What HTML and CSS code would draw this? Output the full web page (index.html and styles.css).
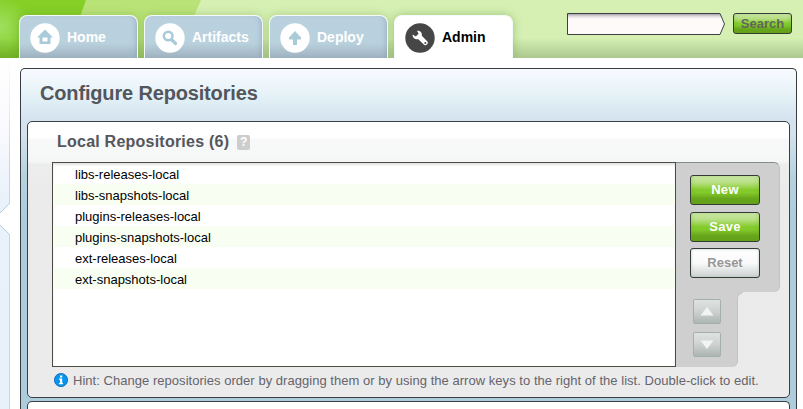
FILE: index.html
```html
<!DOCTYPE html>
<html lang="en">
<head>
<meta charset="utf-8">
<title>Configure Repositories</title>
<link rel="stylesheet" href="styles.css">
</head>
<body>
<header class="header">
  <svg class="header-art" width="803" height="58" aria-hidden="true">
    <defs>
      <radialGradient id="glow" gradientUnits="userSpaceOnUse" cx="0" cy="27" r="30"><stop stop-color="#a0df60"/><stop offset="1" stop-color="#85cf27"/></radialGradient>
      <linearGradient id="shade" x2="0" y2="1"><stop offset="0" stop-color="#406030" stop-opacity="0"/><stop offset="1" stop-color="#406030" stop-opacity=".28"/></linearGradient>
    </defs>
    <path fill="#d5f0b2" d="M0 0h803v58H0z"/>
    <path fill="#b9e377" d="M0 0h201l-26 58H0z"/>
    <path fill="url(#glow)" d="M0 0h86L65 58H0z"/>
    <path fill="url(#shade)" d="M0 38h803v20H0z"/>
  </svg>
  <nav class="tabs">
    <a class="tab"><svg class="tab-icon" viewBox="0 0 30 30"><circle cx="15" cy="15" r="14.7" fill="#fff"/><path fill="#a9cbd9" fill-rule="evenodd" d="M15 6.500 23 14.500H20.500v6.500h-11v-6.500H7zM12.500 14.500v4h5v-4z"/></svg><span>Home</span></a>
    <a class="tab"><svg class="tab-icon" viewBox="0 0 30 30"><circle cx="15" cy="15" r="14.700" fill="#fff"/><g fill="none" stroke="#a9cbd9"><circle cx="13.200" cy="13" r="4.300" stroke-width="2.500"/><path stroke-width="3.200" stroke-linecap="round" d="m17 17 3.500 3.500"/></g></svg><span>Artifacts</span></a>
    <a class="tab"><svg class="tab-icon" viewBox="0 0 30 30"><circle cx="15" cy="15" r="14.700" fill="#fff"/><path fill="#a9cbd9" d="m15 8 6 6.500v2h-4V22h-4v-5.500H9v-2z"/></svg><span>Deploy</span></a>
    <a class="tab active"><svg class="tab-icon" viewBox="0 0 30 30"><circle cx="15" cy="15" r="14.700" fill="#464646"/><path fill="#fff" d="M12 7.800c3-.5 5.500 1.800 4.800 5l5.400 5.400c2 2-1.400 5.400-3.400 3.400l-5.500-5.400c-3 .8-6-1.600-5.700-4.700l3.200 2 2.800-2.700z"/><circle cx="20.300" cy="20" r="1" fill="#464646"/></svg><span>Admin</span></a>
  </nav>
  <form class="search">
    <svg width="160" height="22" viewBox="0 0 160 22" aria-hidden="true"><defs><linearGradient id="field" x2="0" y2="1"><stop stop-color="#9999a0"/><stop offset=".13" stop-color="#ddd9dc"/><stop offset=".25" stop-color="#fffafa"/></linearGradient></defs><path fill="url(#field)" stroke="#404044" d="M.5.500h152.500l4.500 10.500-4.500 10.500H.5z"/></svg>
    <button type="button" class="button search-button">Search</button>
  </form>
</header>
<div class="page">
  <aside class="rail"><svg width="10" height="351"><defs><linearGradient id="rail" x2="0" y2="1"><stop stop-color="#fff"/><stop offset=".2" stop-color="#fafafe"/><stop offset=".4" stop-color="#e9f1fa"/><stop offset="1" stop-color="#e8f1fa"/></linearGradient><linearGradient id="edge" x2="0" y2="1"><stop stop-color="#fff"/><stop offset=".3" stop-color="#c3d7e6"/></linearGradient></defs><path fill="url(#rail)" d="M0 0h10v351H0z"/><path fill="#fff" d="M10 145.500 0 155v12l10 9.500z"/><path fill="url(#edge)" d="M9 0h1v146H9zM9 176h1v175H9z"/><path fill="none" stroke="#b5cfe0" d="m9.500 145.500-9.500 9.500M0 167l9.500 9.500"/></svg></aside>
  <main class="panel">
    <h1>Configure Repositories</h1>
    <section class="card">
      <h2>Local Repositories (6)<span class="help">?</span></h2>
      <div class="editor">
        <ul class="list">
          <li>libs-releases-local</li>
          <li>libs-snapshots-local</li>
          <li>plugins-releases-local</li>
          <li>plugins-snapshots-local</li>
          <li>ext-releases-local</li>
          <li>ext-snapshots-local</li>
        </ul>
        <div class="tools">
          <div class="actions">
            <button class="button">New</button>
            <button class="button">Save</button>
            <button class="button reset">Reset</button>
          </div>
          <div class="movers">
            <button class="move"><svg width="14" height="9"><path d="m7 0 6.500 8.500H.500z"/></svg></button>
            <button class="move"><svg width="14" height="9"><path d="M.500.500h13L7 9z"/></svg></button>
          </div>
        </div>
      </div>
      <p class="hint"><svg width="14" height="14" viewBox="0 0 14 14"><circle cx="7" cy="7" r="6.600" fill="#0795ee" stroke="#1263b5" stroke-width=".8"/><path fill="#fff" d="M6 2.500h2.200v2H6zM5 5.500h3.200V10H9v1.200H5V10h1V6.700H5z"/></svg><span>Hint: Change repositories order by dragging them or by using the arrow keys to the right of the list. Double-click to edit.</span></p>
    </section>
    <section class="card next"></section>
  </main>
</div>
</body>
</html>
```
FILE: styles.css
```css
* { box-sizing: border-box; }
body {
  margin: 0;
  height: 409px;
  overflow: hidden;
  background: #fff;
  font-family: "Liberation Sans", Arial, sans-serif;
  font-size: 13px;
}
h1, h2, p, ul { margin: 0; padding: 0; }
button { font-family: inherit; padding: 0; }

.header {
  position: relative;
  display: flex;
  justify-content: space-between;
  height: 58px;
  padding-left: 19px;
  padding-right: 11px;
  overflow: hidden;
}
.header-art { position: absolute; left: 0; top: 0; z-index: -1; }
.tabs { display: flex; gap: 6px; padding-top: 15px; }
.tab {
  display: flex;
  align-items: flex-start;
  gap: 8px;
  width: 119px;
  height: 43px;
  padding: 7px 0 0 9px;
  border: 1px solid #f5fafa;
  border-bottom: 0;
  border-radius: 8px 8px 0 0;
  background: linear-gradient(#bad0df, #b9d1dd 65%, #9fb1c0);
  box-shadow: 0 0 8px #5c883c55, inset -4px 0 5px -3px #8497b580;
  color: #fff;
  font-size: 14px;
  font-weight: bold;
  line-height: 28px;
}
.tab.active { background: #fff; color: #000; box-shadow: 0 0 9px #5c883c70; }
.tab-icon { width: 30px; height: 30px; margin-left: 0.5px; margin-right: -0.5px; }
.search { display: flex; gap: 6px; padding-top: 13px; }

.button {
  display: block;
  width: 70px;
  height: 30px;
  border: 1px solid #343b35;
  border-radius: 3px;
  background: linear-gradient(#d5edb7, #b6df80 25%, #83cb2b 50%, #82c92b 60%, #68a71d 80%, #63a018);
  box-shadow: inset 0 0 5px #64a51c66;
  color: #fff;
  font-size: 13px;
  font-weight: bold;
  line-height: 28px;
  letter-spacing: .3px;
}
.button.search-button { width: 59px; height: 21px; line-height: 19px; color: #62655d; letter-spacing: 0; }
.button.reset {
  background: linear-gradient(#fff, #fafafa 50%, #ccd1d1);
  box-shadow: inset 0 0 3px #bfc5c5;
  color: #969696;
  letter-spacing: 0;
}

.page { display: flex; height: 351px; gap: 10px; overflow: hidden; }
.rail { width: 10px; }
.rail svg { display: block; }
.panel {
  width: 777px;
  height: 341px;
  margin-top: 10px;
  padding: 0 6px;
  border: 1px solid #383d43;
  border-bottom: 0;
  border-radius: 5px 5px 0 0;
  background: linear-gradient(#f8faff, #edf6fa 16px, #e0eef5 32px, #d5e3f0 50px, #d3e2ed 65px, #b4d1de 110px, #adcddd 145px);
}
h1 { height: 52px; padding-left: 13px; color: #53565c; font-size: 20px; line-height: 48px; letter-spacing: -.16px; white-space: nowrap; }
.card {
  height: 277px;
  padding-left: 24px;
  border: 1px solid #3a3f42;
  border-radius: 5px;
  background: linear-gradient(#fff 16px, #f8f8f8 17px, #f5f7f7 40px, #ededed 42px, #ebebeb 66px);
}
.card.next { margin-top: 3px; height: 8px; border-bottom: 0; border-radius: 5px 5px 0 0; background: #fff; }
h2 { display: flex; align-items: center; height: 40px; padding-left: 5px; color: #53565c; font-size: 16px; letter-spacing: .23px; }
.help {
  width: 13px;
  height: 15px;
  margin-left: 8px;
  border-radius: 2px;
  background: #cdcdcd;
  color: #fff;
  font-size: 12px;
  line-height: 15px;
  text-align: center;
}
.editor { display: flex; height: 205px; }
.list {
  width: 624px;
  border: 1px solid #4c4c45;
  background: #fff;
  box-shadow: inset 0 2px 2px #9994;
  list-style: none;
}
.list li { height: 21px; padding-left: 22px; line-height: 23px; color: #000; }
.list li:nth-child(even) { background: #f8fff2; }
.tools { width: 104px; }
.actions {
  display: flex;
  flex-direction: column;
  height: 130px;
  padding: 12px 0 0 14px;
  border-top: 1px solid #858b8b;
  border-right: 1px solid #bdc4c3;
  border-radius: 0 6px 6px 0;
  background: #cfcfcf;
}
.actions .button + .button { margin-top: 7px; }
.actions .reset.button { margin-top: 6px; }
.movers {
  position: relative;
  display: flex;
  flex-direction: column;
  gap: 8px;
  width: 62px;
  height: 75px;
  padding: 7px 0 0 17px;
  border-right: 1px solid #bdc4c3;
  border-radius: 0 0 6px 0;
  background: #cfcfcf;
}
.movers::after {
  content: "";
  position: absolute;
  left: 61px;
  top: 0;
  width: 6px;
  height: 6px;
  background: radial-gradient(circle at 100% 100%, #ebebeb 4.5px, #bdc4c3 5px, #cfcfcf 6px);
}
.move {
  display: grid;
  place-items: center;
  width: 28px;
  height: 25px;
  border: 1px solid #a4b1ab;
  border-radius: 2px;
  background: linear-gradient(#dfe2e2, #cdd2d1 50%, #acb5b3);
}
.move svg { display: block; fill: #f2f4f4; }
.hint { display: flex; align-items: center; gap: 5px; height: 26px; padding-left: 2px; color: #66646c; letter-spacing: .035px; white-space: nowrap; }
```
